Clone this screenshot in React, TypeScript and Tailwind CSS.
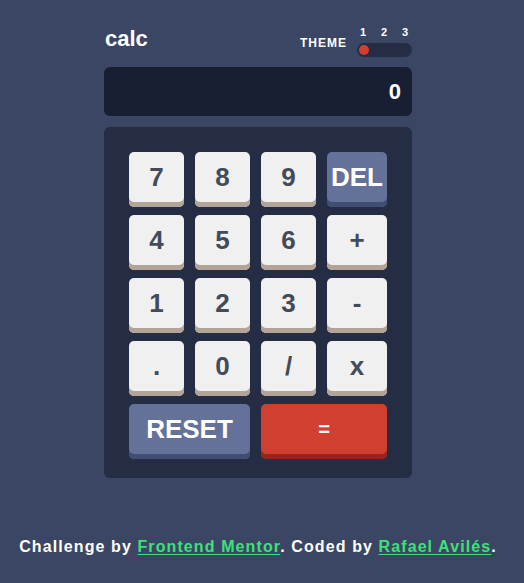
const font = "font-['Liberation_Sans',Arial,sans-serif]";

type Key = { label: string; kind?: "light" | "blue" | "red" };

const rows: Key[] = [
  { label: "7" }, { label: "8" }, { label: "9" }, { label: "DEL", kind: "blue" },
  { label: "4" }, { label: "5" }, { label: "6" }, { label: "+" },
  { label: "1" }, { label: "2" }, { label: "3" }, { label: "-" },
  { label: "." }, { label: "0" }, { label: "/" }, { label: "x" },
];

function CalcKey({ label, kind = "light", className = "" }: Key & { className?: string }) {
  const styles = {
    light: "bg-[#f0f0f0] text-[#434a59] shadow-[inset_0_-5px_0_#b3a497]",
    blue: "bg-[#647198] text-white shadow-[inset_0_-5px_0_#414e73]",
    red: "bg-[#d13f30] text-white shadow-[inset_0_-5px_0_#93261a]",
  }[kind];
  return (
    <button
      className={`h-[55px] rounded-[5px] pb-[5px] flex items-center justify-center font-bold leading-none ${styles} ${className}`}
    >
      {label}
    </button>
  );
}

export default function App() {
  return (
    <div className={`min-h-[583px] bg-[#3a4663] ${font}`}>
      <div className="w-[516px] flex flex-col items-center">
        <div className="w-[308px] mt-[28px]">
          {/* header */}
          <div className="flex justify-between items-end h-[29px]">
            <span className="text-white text-[22px] font-bold leading-none pl-[1px] mb-[7px]">calc</span>
            <div className="flex items-end gap-[10px]">
              <span className="text-white text-[12px] font-bold tracking-[1px] leading-none mb-[8px]">
                THEME
              </span>
              <div className="flex flex-col w-[55px]">
                <div className="flex justify-between pl-[3px] pr-[4px] text-white text-[11px] font-bold leading-none">
                  <span>1</span>
                  <span>2</span>
                  <span>3</span>
                </div>
                <div className="mt-[5px] h-[14px] rounded-full bg-[#242d44] flex items-center px-[2px]">
                  <div className="w-[10px] h-[10px] rounded-full bg-[#d13f30]" />
                </div>
              </div>
            </div>
          </div>

          {/* display */}
          <div className="mt-[10px] h-[49px] rounded-[6px] bg-[#181f33] flex items-center justify-end pr-[11px]">
            <span className="text-white text-[22px] font-bold leading-none">0</span>
          </div>

          {/* keypad */}
          <div className="mt-[11px] rounded-[6px] bg-[#242d44] pt-[25px] pb-[19px] px-[25px]">
            <div className="grid grid-cols-[55px_55px_55px_60px] gap-x-[11px] gap-y-[8px] text-[26px]">
              {rows.map((k) => (
                <CalcKey key={k.label} {...k} />
              ))}
              <CalcKey label="RESET" kind="blue" className="col-span-2" />
              <CalcKey label="=" kind="red" className="col-span-2 text-[20px]" />
            </div>
          </div>
        </div>

        <p className="mt-[57px] text-white text-[16px] font-bold tracking-[1.1px] whitespace-nowrap">
          Challenge by{" "}
          <a className="text-[#3ee07a] underline underline-offset-2">Frontend Mentor</a>. Coded by{" "}
          <a className="text-[#3ee07a] underline underline-offset-2">Rafael Avilés</a>.
        </p>
      </div>
    </div>
  );
}
